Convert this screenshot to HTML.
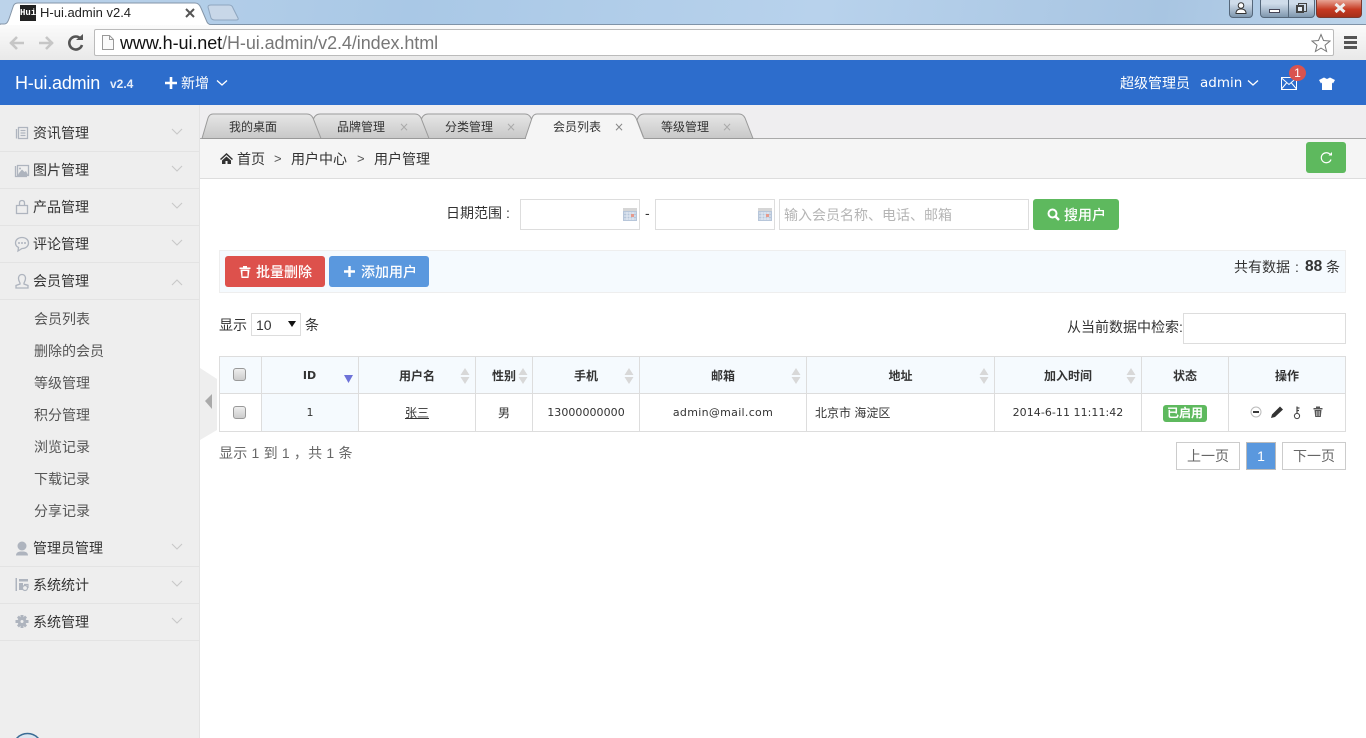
<!DOCTYPE html>
<html lang="zh"><head><meta charset="utf-8"><title>H-ui.admin v2.4</title>
<style>
*{box-sizing:border-box}
html,body{margin:0;padding:0;width:1366px;height:738px;overflow:hidden;background:#fff}
body{position:relative;font-family:"Liberation Sans","Noto Sans CJK SC",sans-serif;font-size:14px;color:#333}
.a,.t,svg.i{position:absolute}
.t{white-space:nowrap;line-height:20px;height:20px}
.line{position:absolute;left:0;width:199px;height:1px;background:#e3e3e3}
.m{left:33px;color:#333;font-size:14px}
.s{left:34px;color:#555;font-size:14px}
.inp{position:absolute;background:#fff;border:1px solid #ddd}
.btn{position:absolute;border-radius:3px;color:#fff;text-align:center;font-size:14px}
table{position:absolute;left:219px;top:356px;width:1127px;border-collapse:collapse;table-layout:fixed;font-size:12px;color:#333}
td,th{border:1px solid #ddd;padding:0;text-align:center;position:relative}
th{height:37px;background:#f5fafe;font-weight:bold}
td{height:38px}
.cb{display:inline-block;width:13px;height:13px;border:1px solid #999;border-radius:3px;background:linear-gradient(#eee,#ccc);vertical-align:middle;position:relative;top:-1px;left:-1px}
.lat{font-family:"DejaVu Sans","Noto Sans CJK SC",sans-serif;font-size:11px}
.sort{position:absolute;right:3px;top:11px}
.pg{position:absolute;top:442px;height:28px;line-height:26px;text-align:center;border:1px solid #ccc;font-size:14px;color:#666;background:#fff}
.tl{font-size:12px;color:#333}
.x{font-size:12px;color:#aaa;font-family:"DejaVu Sans",sans-serif}
</style></head><body>

<!-- browser chrome -->
<div class="a" style="left:0;top:0;width:1366px;height:25px;background:linear-gradient(100deg,#bcd3ea 0,#a9c8e6 30%,#b8d2ec 60%,#a8c5e2 85%,#bcd4ea 100%);border-bottom:1px solid #7f93a8"></div>
<svg class="i" style="left:0;top:0" width="250" height="27">
<path d="M0 24H4C7 24 8 22 10 16L13 7Q14 3 18 3H195Q199 3 201 8L207 22Q208 24 211 25V26H0Z" fill="#fff" stroke="#8596a8"/>
<path d="M208 7Q208 5 211 5H229Q232 5 233 8L238 18Q239 20 236 20H215Q212 20 211 18Z" fill="#c8d7e8" stroke="#8fa6bf"/>
<path d="M186 9L194 17M194 9L186 17" stroke="#555" stroke-width="2"/>
</svg>
<div class="a" style="left:20px;top:5px;width:16px;height:16px;background:#222;color:#fff;font:bold 9px/16px 'Liberation Mono',monospace;text-align:center">Hui</div>
<span class="t" style="left:40px;top:3px;font-size:13px;color:#222">H-ui.admin v2.4</span>
<div class="a" style="left:0;top:25px;width:1366px;height:35px;background:linear-gradient(#fbfbfb,#e9e9e9)"></div>
<svg class="i" style="left:8px;top:33px" width="80" height="20">
<g fill="none" stroke="#c6c6c6" stroke-width="2.6"><path d="M2 10H16M9 4L3 10L9 16"/><path d="M31 10H45M38 4L44 10L38 16"/></g>
<path d="M72.500 5.500A6.500 6.500 0 1 0 74 12" fill="none" stroke="#555" stroke-width="2.600"/><path d="M68 7H75V1Z" fill="#555"/>
</svg>
<div class="a" style="left:94px;top:29px;width:1240px;height:27px;background:#fff;border:1px solid #bbb;border-radius:2px"></div>
<svg class="i" style="left:101px;top:34px" width="14" height="17"><path d="M1.500 1.500H8.500L12.500 5.500V15.500H1.500ZM8.500 1.500V5.500H12.500" fill="#fafafa" stroke="#999"/></svg>
<span class="t" style="left:120px;top:33px;font-size:18px;letter-spacing:-.08px;color:#111">www.h-ui.net<span style="color:#777">/H-ui.admin/v2.4/index.html</span></span>
<svg class="i" style="left:1311px;top:33px" width="20" height="20"><path d="M10 1.500L12.500 7.500L19 8L14 12.200L15.600 18.500L10 15.100L4.400 18.500L6 12.200L1 8L7.500 7.500Z" fill="#fff" stroke="#777"/></svg>
<div class="a" style="left:1344px;top:36px;width:13px;height:3px;background:#555;box-shadow:0 5px 0 #555,0 10px 0 #555"></div>
<!-- window buttons -->
<div class="a" style="left:1229px;top:-3px;width:24px;height:21px;border:1px solid #55677a;border-radius:4px;background:linear-gradient(#cfdcea 30%,#7f97ae)"></div>
<svg class="i" style="left:1235px;top:2px" width="12" height="12"><circle cx="6" cy="3.500" r="2.800" fill="#fff" stroke="#333"/><path d="M1 11.500Q1 7 6 7Q11 7 11 11.500Z" fill="#fff" stroke="#333"/></svg>
<div class="a" style="left:1260px;top:-3px;width:55px;height:21px;border:1px solid #55677a;border-radius:4px;background:linear-gradient(#cfdcea 30%,#7f97ae)"></div>
<div class="a" style="left:1288px;top:0;width:1px;height:17px;background:#55677a"></div>
<div class="a" style="left:1269px;top:9px;width:11px;height:4px;background:#fff;border:1px solid #445"></div>
<div class="a" style="left:1298px;top:3px;width:9px;height:9px;background:#cfdcea;border:1px solid #444"></div>
<div class="a" style="left:1296px;top:5px;width:8px;height:8px;background:#e6eef6;border:2px solid #444"></div>
<div class="a" style="left:1316px;top:-3px;width:46px;height:21px;border:1px solid #7a3a30;border-radius:0 0 4px 4px;background:linear-gradient(#e8a596 10%,#c63a22 60%,#a6301a)"></div>
<svg class="i" style="left:1334px;top:3px" width="12" height="10"><path d="M1.500 1L10.500 9M10.500 1L1.500 9" stroke="#eee" stroke-width="3"/></svg>

<!-- header -->
<div class="a" style="left:0;top:60px;width:1366px;height:45px;background:#2d6dcc"></div>
<span class="t" style="left:15px;top:73px;font-size:18px;letter-spacing:-.2px;color:#fff">H-ui.admin</span>
<span class="t" style="left:110px;top:74px;font-size:12px;font-weight:bold;color:#e6eefa">v2.4</span>
<svg class="i" style="left:165px;top:77px" width="12" height="12"><path d="M6 0V12M0 6H12" stroke="#fff" stroke-width="2.600"/></svg>
<span class="t" style="left:181px;top:73px;color:#fff">新增</span>
<svg class="i" style="left:216px;top:79px" width="12" height="8"><path d="M1 1.500L6 6L11 1.500" fill="none" stroke="#fff" stroke-width="1.300"/></svg>
<span class="t" style="left:1120px;top:73px;color:#fff">超级管理员</span>
<span class="t" style="left:1200px;top:73px;color:#fff;font-size:13.500px;font-family:'DejaVu Sans',sans-serif">admin</span>
<svg class="i" style="left:1247px;top:79px" width="12" height="8"><path d="M1 1.500L6 6L11 1.500" fill="none" stroke="#fff" stroke-width="1.300"/></svg>
<svg class="i" style="left:1281px;top:77px" width="16" height="13"><path d="M.5 .5H15.500V12.500H.5ZM.5 1L8 7.500L15.500 1M.5 12L5.500 6M15.500 12L10.500 6" fill="none" stroke="#fff"/></svg>
<div class="a" style="left:1289px;top:65px;width:17px;height:16px;border-radius:50%;background:#d9534f;color:#fff;font-size:12px;line-height:16px;text-align:center">1</div>
<svg class="i" style="left:1319px;top:77px" width="16" height="13"><path d="M5 0.500L8 2L11 0.500L16 3L14 6.500L13 5.500V13H3V5.500L2 6.500L0 3Z" fill="#fff"/></svg>

<!-- sidebar -->
<div class="a" style="left:0;top:105px;width:200px;height:633px;background:#eee;border-right:1px solid #e3e3e3"></div>
<div class="line" style="top:151px"></div><div class="line" style="top:188px"></div><div class="line" style="top:225px"></div><div class="line" style="top:262px"></div><div class="line" style="top:299px"></div><div class="line" style="top:566px"></div><div class="line" style="top:603px"></div><div class="line" style="top:640px"></div>
<span class="t m" style="top:123px">资讯管理</span>
<span class="t m" style="top:160px">图片管理</span>
<span class="t m" style="top:197px">产品管理</span>
<span class="t m" style="top:234px">评论管理</span>
<span class="t m" style="top:271px">会员管理</span>
<span class="t s" style="top:309px">会员列表</span>
<span class="t s" style="top:341px">删除的会员</span>
<span class="t s" style="top:373px">等级管理</span>
<span class="t s" style="top:405px">积分管理</span>
<span class="t s" style="top:437px">浏览记录</span>
<span class="t s" style="top:469px">下载记录</span>
<span class="t s" style="top:501px">分享记录</span>
<span class="t m" style="top:538px">管理员管理</span>
<span class="t m" style="top:575px">系统统计</span>
<span class="t m" style="top:612px">系统管理</span>
<svg class="i" style="left:0;top:105px" width="199" height="640">
<g fill="none" stroke="#c8c8c8" stroke-width="1.100">
<path d="M172 24L177 29L182 24M172 61L177 66L182 61M172 98L177 103L182 98M172 135L177 140L182 135M172 180L177 175L182 180M172 439L177 444L182 439M172 476L177 481L182 476M172 513L177 518L182 513"/>
</g>
<g fill="none" stroke="#aeb4be" stroke-width="1.300">
<!-- news --><path d="M18.500 22.500H27.500V33.500H18.500ZM16.500 24V33.500M20.500 25.500H25.500M20.500 28H25.500M20.500 30.500H25.500"/>
<!-- picture --><path d="M17.500 60.500H28.500V70.500H17.500ZM15.500 61V71.500H27"/>
<!-- bag --><path d="M16.500 100.500H27.500V108.500H16.500ZM19.500 100V98Q19.500 95.500 22 95.500Q24.500 95.500 24.500 98V100"/>
<!-- comment --><path d="M22 132.500C26 132.500 28.500 135 28.500 138C28.500 141 26 143.500 22 143.500L18 146L18.500 142.500C16.500 141.500 15.500 140 15.500 138C15.500 135 18 132.500 22 132.500Z"/>
<!-- member --><path d="M22 169.500C24.500 169.500 25.500 171.500 25.500 173.500C25.500 175.500 24.500 177 24 178V179L28 180.500V183H16V180.500L20 179V178C19.500 177 18.500 175.500 18.500 173.500C18.500 171.500 19.500 169.500 22 169.500Z"/>
</g>
<g fill="#aeb4be">
<path d="M19 68L22 64.500L24.500 67L26 66L28 70H18Z"/><circle cx="20" cy="63.500" r="1"/>
<circle cx="19" cy="138" r="1"/><circle cx="22" cy="138" r="1"/><circle cx="25" cy="138" r="1"/>
<!-- admin --><circle cx="22" cy="441" r="4.500"/><path d="M16 450.500Q16 447 20 446.500H24Q28 447 28 450.500Z"/>
<!-- stats --><path d="M15.500 473H17V486H15.500ZM19 474H28V476.500H19ZM19 478H23V485H19Z"/>
<!-- gear --><circle cx="22" cy="516.500" r="4.500"/><path d="M20.500 510H23.500V523H20.500ZM15.500 515H28.500V518H15.500ZM17 512.500L19 510.500L27 520.500L25 522.500ZM27 512.500L25 510.500L17 520.500L19 522.500Z"/>
</g>
<g fill="none" stroke="#aeb4be" stroke-width="1.200"><path d="M24 479.500H28V483"/><circle cx="25" cy="483" r="2.500"/></g>
<circle cx="22" cy="516.500" r="1.500" fill="#eee"/>
</svg>
<svg class="i" style="left:0;top:725px" width="60" height="13"><circle cx="27.500" cy="23" r="14.500" fill="#dbe6f0" stroke="#3b6c94" stroke-width="1.500"/></svg>

<!-- tabs -->
<div class="a" style="left:200px;top:105px;width:1166px;height:34px;background:#efeef0;border-bottom:1px solid #aaa"></div>
<svg class="i" style="left:200px;top:105px" width="560" height="34">
<defs><linearGradient id="g" x1="0" y1="0" x2="0" y2="1"><stop offset="0" stop-color="#e6e6e6"/><stop offset="1" stop-color="#c8c8c8"/></linearGradient></defs>
<g fill="url(#g)" stroke="#9a9a9a">
<path d="M444 33.500L437 15Q439 9 444 9H539Q543 9 545 13L553 33.500Z"/>
<path d="M335 33.500L221 33.500L221 15Q223 9 228 9H325Q329 9 331 13L339 33.500Z"/>
<path d="M229 33.500L113 33.500L113 15Q115 9 120 9H215Q219 9 221 13L229 33.500Z"/>
<path d="M2 33.500L8 13Q9.500 9 13 9H107Q111 9 113 13L121 33.500Z"/>
</g>
<path d="M325 34L332 13Q333.500 9 337 9H430Q434 9 436 13L444 34Z" fill="#f5f5f5" stroke="#9a9a9a"/>
<path d="M326 33.500H443.500" stroke="#f5f5f5" stroke-width="2"/>
</svg>
<span class="t tl" style="left:229px;top:117px">我的桌面</span>
<span class="t tl" style="left:337px;top:117px">品牌管理</span><span class="t x" style="left:399px;top:117px">×</span>
<span class="t tl" style="left:445px;top:117px">分类管理</span><span class="t x" style="left:506px;top:117px">×</span>
<span class="t tl" style="left:553px;top:117px">会员列表</span><span class="t x" style="left:614px;top:117px;color:#888">×</span>
<span class="t tl" style="left:661px;top:117px">等级管理</span><span class="t x" style="left:722px;top:117px">×</span>

<!-- breadcrumb -->
<div class="a" style="left:200px;top:139px;width:1166px;height:40px;background:#f5f5f5;border-bottom:1px solid #ddd"></div>
<svg class="i" style="left:220px;top:153px" width="13" height="11"><path d="M6.500 0L13 6L12 7L6.500 2L1 7L0 6ZM2 7.500L6.500 3.500L11 7.500V11H7.500V8H5.500V11H2Z" fill="#333"/></svg>
<span class="t" style="left:237px;top:149px;font-size:14px">首页</span>
<span class="t" style="left:274px;top:149px;font-size:13px;color:#555">&gt;</span>
<span class="t" style="left:291px;top:149px;font-size:14px">用户中心</span>
<span class="t" style="left:357px;top:149px;font-size:13px;color:#555">&gt;</span>
<span class="t" style="left:374px;top:149px;font-size:14px">用户管理</span>
<div class="btn" style="left:1306px;top:142px;width:40px;height:31px;background:#5eb95e"></div>
<svg class="i" style="left:1319px;top:151px" width="14" height="14"><path d="M11.500 4A5 5 0 1 0 12 8.500" fill="none" stroke="#fff" stroke-width="1.200"/><path d="M9.500 4.500H13V1Z" fill="#fff"/></svg>

<!-- search -->
<span class="t" style="left:446px;top:203px">日期范围</span><span class="t" style="left:506px;top:203px">:</span>
<div class="inp" style="left:520px;top:199px;width:120px;height:31px"></div>
<span class="t" style="left:645px;top:203px">-</span>
<div class="inp" style="left:655px;top:199px;width:120px;height:31px"></div>
<svg class="i" style="left:623px;top:208px" width="14" height="13"><rect width="14" height="13" fill="#b7c6da"/><rect y="0" width="14" height="3" fill="#d6d6d6"/><path d="M1 5H13M1 8H13M1 11H13M4 4V12M7 4V12M10 4V12" stroke="#e6ecf4"/><rect x="8" y="6" width="3" height="3" fill="#e59a8c"/></svg>
<svg class="i" style="left:758px;top:208px" width="14" height="13"><rect width="14" height="13" fill="#b7c6da"/><rect y="0" width="14" height="3" fill="#d6d6d6"/><path d="M1 5H13M1 8H13M1 11H13M4 4V12M7 4V12M10 4V12" stroke="#e6ecf4"/><rect x="8" y="6" width="3" height="3" fill="#e59a8c"/></svg>
<div class="inp" style="left:779px;top:199px;width:250px;height:31px"></div>
<span class="t" style="left:784px;top:205px;color:#b5b5b5">输入会员名称、电话、邮箱</span>
<div class="btn" style="left:1033px;top:199px;width:86px;height:31px;background:#5eb95e"></div>
<svg class="i" style="left:1047px;top:208px" width="13" height="13"><circle cx="5.500" cy="5.500" r="4" fill="none" stroke="#fff" stroke-width="2"/><path d="M8.500 8.500L12 12" stroke="#fff" stroke-width="2.400"/></svg>
<span class="t" style="left:1064px;top:205px;color:#fff;font-weight:500">搜用户</span>

<!-- toolbar -->
<div class="a" style="left:219px;top:250px;width:1127px;height:43px;background:#f5fafe;border:1px solid #eee"></div>
<div class="btn" style="left:225px;top:256px;width:100px;height:31px;background:#dd514c"></div>
<svg class="i" style="left:239px;top:266px" width="12" height="12"><path d="M0.500 1.500H11.500V3H0.500ZM4 0H8V1.500H4ZM1.500 3.500H10.500L9.500 12H2.500Z" fill="#fff"/><path d="M3.500 5H8.500V10.500H3.500Z" fill="#dd514c"/></svg>
<span class="t" style="left:256px;top:262px;color:#fff;font-weight:500">批量删除</span>
<div class="btn" style="left:329px;top:256px;width:100px;height:31px;background:#5a98de"></div>
<svg class="i" style="left:344px;top:266px" width="11" height="11"><path d="M5.500 0V11M0 5.500H11" stroke="#fff" stroke-width="2.400"/></svg>
<span class="t" style="left:361px;top:262px;color:#fff;font-weight:500">添加用户</span>
<span class="t" style="left:1234px;top:257px;font-size:14px">共有数据</span><span class="t" style="left:1295px;top:257px;font-size:14px">:</span>
<span class="t" style="left:1305px;top:257px;font-size:15.500px;font-weight:bold">88</span>
<span class="t" style="left:1326px;top:257px;font-size:14px">条</span>

<!-- datatable controls -->
<span class="t" style="left:219px;top:315px">显示</span>
<div class="inp" style="left:251px;top:313px;width:50px;height:23px"></div>
<span class="t" style="left:256px;top:315px;font-size:14px">10</span>
<svg class="i" style="left:288px;top:321px" width="8" height="6"><path d="M0 0H8L4 6Z" fill="#111"/></svg>
<span class="t" style="left:305px;top:315px">条</span>
<span class="t" style="left:1067px;top:317px">从当前数据中检索:</span>
<div class="inp" style="left:1183px;top:313px;width:163px;height:31px"></div>

<!-- table -->
<table>
<colgroup><col style="width:42px"><col style="width:97px"><col style="width:117px"><col style="width:57px"><col style="width:107px"><col style="width:167px"><col style="width:188px"><col style="width:147px"><col style="width:87px"><col style="width:117px"></colgroup>
<tr>
<th><span class="cb"></span></th>
<th class="lat" style="font-size:11px;padding-right:1px">ID<svg class="sort" style="right:5px;top:18px" width="9" height="8"><path d="M0 0H9L4.500 8Z" fill="#6d72d8"/></svg></th>
<th>用户名<svg class="sort" style="right:5px" width="10" height="16"><path d="M5 0L9.500 7H.5ZM5 16L.5 9H9.500Z" fill="#d8d8d8"/></svg></th>
<th>性别<svg class="sort" width="10" height="16" style="right:4px"><path d="M5 0L9.500 7H.5ZM5 16L.5 9H9.500Z" fill="#d8d8d8"/></svg></th>
<th>手机<svg class="sort" style="right:5px" width="10" height="16"><path d="M5 0L9.500 7H.5ZM5 16L.5 9H9.500Z" fill="#d8d8d8"/></svg></th>
<th>邮箱<svg class="sort" style="right:5px" width="10" height="16"><path d="M5 0L9.500 7H.5ZM5 16L.5 9H9.500Z" fill="#d8d8d8"/></svg></th>
<th>地址<svg class="sort" style="right:5px" width="10" height="16"><path d="M5 0L9.500 7H.5ZM5 16L.5 9H9.500Z" fill="#d8d8d8"/></svg></th>
<th>加入时间<svg class="sort" style="right:5px" width="10" height="16"><path d="M5 0L9.500 7H.5ZM5 16L.5 9H9.500Z" fill="#d8d8d8"/></svg></th>
<th>状态</th>
<th>操作</th>
</tr>
<tr>
<td><span class="cb"></span></td>
<td class="lat" style="background:#f5fafe">1</td>
<td><u>张三</u></td>
<td>男</td>
<td class="lat" style="letter-spacing:.05px">13000000000</td>
<td class="lat" style="letter-spacing:.3px">admin@mail.com</td>
<td style="text-align:left;padding-left:8px">北京市 海淀区</td>
<td class="lat" style="letter-spacing:.05px">2014-6-11 11:11:42</td>
<td><span style="display:inline-block;width:44px;height:17px;line-height:17px;background:#5eb95e;color:#fff;font-weight:bold;border-radius:3px;position:relative;top:1px">已启用</span></td>
<td></td>
</tr>
</table>
<svg class="i" style="left:1250px;top:405px" width="76" height="15">
<circle cx="6" cy="7" r="5" fill="#fff" stroke="#bbb"/><path d="M3 7H9" stroke="#222" stroke-width="1.800"/>
<path d="M21 13L22 9.500L30 1.500L33 4.500L25 12Z" fill="#333"/>
<circle cx="47" cy="11" r="2.600" fill="#fff" stroke="#444"/><path d="M47 8.500V1.500M47 3H49.500M47 5.500H49" stroke="#444" stroke-width="1.200" fill="none"/>
<path d="M63.500 3H72.500V4.500H63.500ZM66 1.500H70V3H66ZM64.500 5H71.500L70.800 12H65.200Z" fill="#555"/><path d="M66.500 6V11M68 6V11M69.500 6V11" stroke="#ddd" stroke-width=".6"/>
</svg>

<!-- footer -->
<span class="t" style="left:219px;top:443px;color:#666;letter-spacing:.2px">显示 1 到 1 ，共 1 条</span>
<div class="pg" style="left:1176px;width:64px">上一页</div>
<div class="pg" style="left:1246px;width:30px;background:#5a98de;color:#fff;border-color:#bbb">1</div>
<div class="pg" style="left:1282px;width:64px">下一页</div>

<!-- sidebar collapse handle -->
<svg class="i" style="left:200px;top:368px" width="18" height="72"><path d="M0 0L17 11V62L0 72Z" fill="#eee"/><path d="M5 33L12 26V41Z" fill="#aaa"/></svg>
</body></html>
